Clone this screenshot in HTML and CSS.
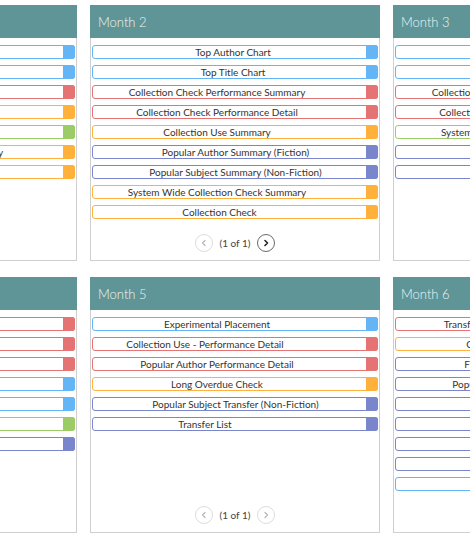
FILE: index.html
```html
<!DOCTYPE html>
<html>
<head>
<meta charset="utf-8">
<link rel="stylesheet" href="styles.css">
</head>
<body>
<div class="board">
  <section class="card">
    <div class="card-head">Month 1</div>
    <div class="list">
      <div class="item blue"><span class="label">Top Author Chart</span><span class="tab"></span></div>
      <div class="item blue"><span class="label">Top Title Chart</span><span class="tab"></span></div>
      <div class="item red"><span class="label shift-a">Collection Check Performance Summar</span><span class="tab"></span></div>
      <div class="item orange"><span class="label shift-a">Collection Use Summary</span><span class="tab"></span></div>
      <div class="item green"><span class="label shift-a">System Wide Collection Use Summary</span><span class="tab"></span></div>
      <div class="item orange"><span class="label shift-a">System Wide Collection Check Summary</span><span class="tab"></span></div>
      <div class="item orange"><span class="label shift-c">Collection Check</span><span class="tab"></span></div>
    </div>
    <div class="pager">
      <span class="nav off"><svg viewBox="0 0 10 10"><path d="M6 2.5 3.5 5 6 7.5"/></svg></span>
      <span class="count">(1 of 1)</span>
      <span class="nav on"><svg viewBox="0 0 10 10"><path d="M4 2.5 6.5 5 4 7.5"/></svg></span>
    </div>
  </section>

  <section class="card">
    <div class="card-head">Month 2</div>
    <div class="list">
      <div class="item blue"><span class="label shift-d">Top Author Chart</span><span class="tab"></span></div>
      <div class="item blue"><span class="label shift-d">Top Title Chart</span><span class="tab"></span></div>
      <div class="item red"><span class="label shift-a">Collection Check Performance Summary</span><span class="tab"></span></div>
      <div class="item red"><span class="label shift-a">Collection Check Performance Detail</span><span class="tab"></span></div>
      <div class="item orange"><span class="label shift-a">Collection Use Summary</span><span class="tab"></span></div>
      <div class="item purple"><span class="label">Popular Author Summary (Fiction)</span><span class="tab"></span></div>
      <div class="item purple"><span class="label">Popular Subject Summary (Non-Fiction)</span><span class="tab"></span></div>
      <div class="item orange"><span class="label shift-a">System Wide Collection Check Summary</span><span class="tab"></span></div>
      <div class="item orange"><span class="label shift-c">Collection Check</span><span class="tab"></span></div>
    </div>
    <div class="pager">
      <span class="nav off"><svg viewBox="0 0 10 10"><path d="M6 2.5 3.5 5 6 7.5"/></svg></span>
      <span class="count">(1 of 1)</span>
      <span class="nav on"><svg viewBox="0 0 10 10"><path d="M4 2.5 6.5 5 4 7.5"/></svg></span>
    </div>
  </section>

  <section class="card">
    <div class="card-head">Month 3</div>
    <div class="list">
      <div class="item blue"><span class="label shift-d">Top Author Chart</span><span class="tab"></span></div>
      <div class="item blue"><span class="label shift-d">Top Title Chart</span><span class="tab"></span></div>
      <div class="item red"><span class="label shift-a">Collection Check Performance Summary</span><span class="tab"></span></div>
      <div class="item red"><span class="label shift-a">Collection Check Performance Detail</span><span class="tab"></span></div>
      <div class="item green"><span class="label shift-a">System Wide Stock Check Summary</span><span class="tab"></span></div>
      <div class="item purple"><span class="label">Popular Author Transfer</span><span class="tab"></span></div>
      <div class="item purple"><span class="label">Popular Subject Transfer</span><span class="tab"></span></div>
    </div>
    <div class="pager">
      <span class="nav off"><svg viewBox="0 0 10 10"><path d="M6 2.5 3.5 5 6 7.5"/></svg></span>
      <span class="count">(1 of 1)</span>
      <span class="nav on"><svg viewBox="0 0 10 10"><path d="M4 2.5 6.5 5 4 7.5"/></svg></span>
    </div>
  </section>

  <section class="card">
    <div class="card-head">Month 4</div>
    <div class="list">
      <div class="item red"><span class="label shift-b">Collection Use - Performance Detail</span><span class="tab"></span></div>
      <div class="item red"><span class="label shift-a">Popular Author Performance Detail</span><span class="tab"></span></div>
      <div class="item red"><span class="label shift-a">Collection Check Summary</span><span class="tab"></span></div>
      <div class="item blue"><span class="label shift-a">Top Author Chart</span><span class="tab"></span></div>
      <div class="item blue"><span class="label shift-a">Top Title Chart</span><span class="tab"></span></div>
      <div class="item green"><span class="label shift-a">System Wide Use Summary</span><span class="tab"></span></div>
      <div class="item purple"><span class="label shift-b">Transfer List</span><span class="tab"></span></div>
    </div>
    <div class="pager">
      <span class="nav off"><svg viewBox="0 0 10 10"><path d="M6 2.5 3.5 5 6 7.5"/></svg></span>
      <span class="count">(1 of 1)</span>
      <span class="nav off"><svg viewBox="0 0 10 10"><path d="M4 2.5 6.5 5 4 7.5"/></svg></span>
    </div>
  </section>

  <section class="card">
    <div class="card-head">Month 5</div>
    <div class="list">
      <div class="item blue"><span class="label shift-a">Experimental Placement</span><span class="tab"></span></div>
      <div class="item red"><span class="label shift-b">Collection Use - Performance Detail</span><span class="tab"></span></div>
      <div class="item red"><span class="label shift-a">Popular Author Performance Detail</span><span class="tab"></span></div>
      <div class="item orange"><span class="label shift-a">Long Overdue Check</span><span class="tab"></span></div>
      <div class="item purple"><span class="label">Popular Subject Transfer (Non-Fiction)</span><span class="tab"></span></div>
      <div class="item purple"><span class="label shift-b">Transfer List</span><span class="tab"></span></div>
    </div>
    <div class="pager">
      <span class="nav off"><svg viewBox="0 0 10 10"><path d="M6 2.5 3.5 5 6 7.5"/></svg></span>
      <span class="count">(1 of 1)</span>
      <span class="nav off"><svg viewBox="0 0 10 10"><path d="M4 2.5 6.5 5 4 7.5"/></svg></span>
    </div>
  </section>

  <section class="card">
    <div class="card-head">Month 6</div>
    <div class="list">
      <div class="item red"><span class="label shift-a">Transfer Performance Check Detail</span><span class="tab"></span></div>
      <div class="item orange"><span class="label shift-a">Collection Use Summary</span><span class="tab"></span></div>
      <div class="item purple"><span class="label shift-a">Fiction Transfer Summary</span><span class="tab"></span></div>
      <div class="item purple"><span class="label">Popular Subject Summary (Non-Fiction)</span><span class="tab"></span></div>
      <div class="item purple"><span class="label">Transfer List</span><span class="tab"></span></div>
      <div class="item purple"><span class="label">Transfer Summary</span><span class="tab"></span></div>
      <div class="item purple"><span class="label">Popular Author Transfer</span><span class="tab"></span></div>
      <div class="item purple"><span class="label">Popular Subject Transfer</span><span class="tab"></span></div>
      <div class="item blue"><span class="label">Top Title Chart</span><span class="tab"></span></div>
    </div>
    <div class="pager">
      <span class="nav off"><svg viewBox="0 0 10 10"><path d="M6 2.5 3.5 5 6 7.5"/></svg></span>
      <span class="count">(1 of 1)</span>
      <span class="nav off"><svg viewBox="0 0 10 10"><path d="M4 2.5 6.5 5 4 7.5"/></svg></span>
    </div>
  </section>
</div>
</body>
</html>
```

FILE: styles.css
```css
html, body {
  margin: 0;
  padding: 0;
  background: #ffffff;
  overflow: hidden;
}

body {
  width: 470px;
  height: 538px;
  font-family: "Lato", "Liberation Sans", sans-serif;
  color: #333333;
}

.board {
  display: grid;
  grid-template-columns: repeat(3, 290px);
  grid-auto-rows: 256px;
  column-gap: 13px;
  row-gap: 16px;
  margin-left: -213px;
  padding-top: 5px;
}

.card {
  box-sizing: border-box;
  border: 1px solid #cfcfcf;
  background: #ffffff;
  display: flex;
  flex-direction: column;
}

.card-head {
  height: 33px;
  margin: -1px -1px 0;
  padding-left: 8px;
  background: #5f9596;
  color: #eef4f4;
  font-size: 13px;
  font-weight: 300;
  display: flex;
  align-items: center;
}

.list {
  display: flex;
  flex-direction: column;
  gap: 6px;
  padding: 7px 1px 0;
}

.item {
  box-sizing: border-box;
  height: 14px;
  border: 1px solid;
  border-radius: 3px;
  display: flex;
  background: #ffffff;
}

.label {
  flex: 1;
  text-align: center;
  font-size: 10px;
  line-height: 12px;
  white-space: nowrap;
  overflow: hidden;
  color: #333333;
  padding-left: 12px;
}

.shift-a { padding-right: 25px; padding-left: 0; }
.shift-b { padding-right: 49px; padding-left: 0; }
.shift-c { padding-right: 20px; padding-left: 0; }
.shift-d { padding-left: 7px; }

.tab {
  width: 12px;
  margin: -1px -1px -1px 0;
  border-radius: 0 3px 3px 0;
}

.blue { border-color: #64b5f6; }
.blue .tab { background: #64b5f6; }
.red { border-color: #e57373; }
.red .tab { background: #e57373; }
.orange { border-color: #ffb13b; }
.orange .tab { background: #ffb13b; }
.green { border-color: #9ccc65; }
.green .tab { background: #9ccc65; }
.purple { border-color: #7986cb; }
.purple .tab { background: #7986cb; }

.pager {
  margin-top: auto;
  padding-bottom: 8px;
  display: flex;
  justify-content: center;
  align-items: center;
  gap: 7px;
}

.count {
  font-size: 10px;
  color: #444444;
}

.nav {
  box-sizing: border-box;
  width: 18px;
  height: 18px;
  border-radius: 50%;
  border: 1px solid #dddddd;
  display: flex;
  align-items: center;
  justify-content: center;
}

.nav svg {
  width: 10px;
  height: 10px;
  fill: none;
  stroke-width: 1.2;
  stroke-linecap: round;
  stroke-linejoin: round;
}

.nav.off svg { stroke: #b5b5b5; }
.nav.on { border-color: #6a6a6a; }
.nav.on svg { stroke: #222222; stroke-width: 1.6; }
```
